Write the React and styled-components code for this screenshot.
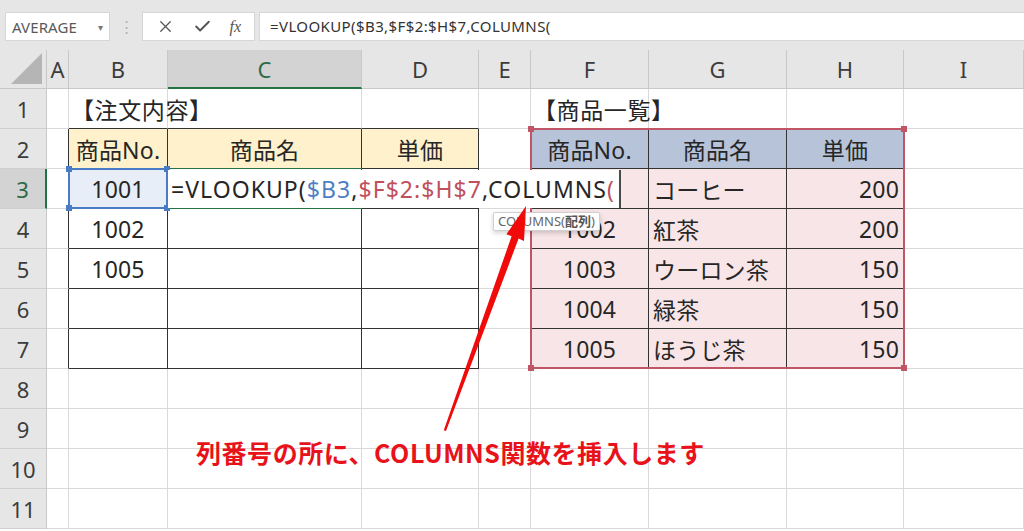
import React from 'react'
import styled, { createGlobalStyle } from 'styled-components'
import { X, Check } from 'lucide-react'

const GlobalStyle = createGlobalStyle`
  html, body {
    margin: 0;
    padding: 0;
    background: #ffffff;
    overflow: hidden;
  }
  body {
    font-family: 'Noto Sans', 'Noto Sans CJK JP', sans-serif;
  }
`

const COLS = [47, 22, 99, 194, 117, 52, 118, 138, 117, 120]
const LETTERS = ['', 'A', 'B', 'C', 'D', 'E', 'F', 'G', 'H', 'I']
const GRID = '#d9d9d9'
const DARK = '#333333'

// row -> { colIndex: [text, align, kind] }
const DATA = {
  1: { 2: ['【注文内容】', 'left', 'title'], 6: ['【商品一覧】', 'left', 'title'] },
  2: {
    2: ['商品No.', 'center', 'yhead'], 3: ['商品名', 'center', 'yhead'], 4: ['単価', 'center', 'yhead'],
    6: ['商品No.', 'center', 'bhead'], 7: ['商品名', 'center', 'bhead'], 8: ['単価', 'center', 'bhead'],
  },
  3: { 2: ['1001', 'center', 'sel'], 6: ['1001', 'center', 'pink'], 7: ['コーヒー', 'left', 'pink'], 8: ['200', 'right', 'pink'] },
  4: { 2: ['1002', 'center'], 6: ['1002', 'center', 'pink'], 7: ['紅茶', 'left', 'pink'], 8: ['200', 'right', 'pink'] },
  5: { 2: ['1005', 'center'], 6: ['1003', 'center', 'pink'], 7: ['ウーロン茶', 'left', 'pink'], 8: ['150', 'right', 'pink'] },
  6: { 6: ['1004', 'center', 'pink'], 7: ['緑茶', 'left', 'pink'], 8: ['150', 'right', 'pink'] },
  7: { 6: ['1005', 'center', 'pink'], 7: ['ほうじ茶', 'left', 'pink'], 8: ['150', 'right', 'pink'] },
}

const inTable = (r, c) => r >= 2 && r <= 7 && ((c >= 2 && c <= 4) || (c >= 6 && c <= 8))
const fillFor = (r, c, kind) => {
  if (kind === 'yhead') return '#fff1cc'
  if (kind === 'bhead') return '#b7c3d9'
  if (kind === 'sel') return '#e8eef8'
  if (r >= 3 && r <= 7 && c >= 6 && c <= 8) return '#f8e5e7'
  return 'transparent'
}

const App = () => {
  const rows = Array.from({ length: 11 }, (_, i) => i + 1)
  return (
    <Page>
      <GlobalStyle />
      <Toolbar>
        <NameBox>
          <span>AVERAGE</span>
          <Caret>▾</Caret>
        </NameBox>
        <Dots>⋮</Dots>
        <ButtonBox>
          <X size={19} strokeWidth={1.6} color="#555" />
          <Check size={19} strokeWidth={2.4} color="#555" />
          <Fx>fx</Fx>
        </ButtonBox>
        <FormulaInput>=VLOOKUP($B3,$F$2:$H$7,COLUMNS(</FormulaInput>
      </Toolbar>

      <Sheet>
        <Corner $r={0} $c={0}>
          <svg width="32" height="32" viewBox="0 0 32 32">
            <polygon points="31,0 31,31 0,31" fill="#b5b5b5" />
          </svg>
        </Corner>
        {LETTERS.slice(1).map((l, i) => (
          <ColHead key={l} $r={0} $c={i + 1} $active={l === 'C'}>{l}</ColHead>
        ))}
        {rows.map((r) => (
          <React.Fragment key={r}>
            <RowHead $r={r} $c={0} $active={r === 3}>{r}</RowHead>
            {COLS.slice(1).map((_, i) => {
              const c = i + 1
              const cell = (DATA[r] && DATA[r][c]) || ['', 'left']
              const [text, align, kind] = cell
              const right = inTable(r, c) || inTable(r, c + 1) ? DARK : GRID
              const bottom = inTable(r, c) || inTable(r + 1, c) ? DARK : GRID
              return (
                <Cell
                  key={c}
                  $r={r}
                  $c={c}
                  $align={align}
                  $bg={fillFor(r, c, kind)}
                  $right={right}
                  $bottom={bottom}
                  $title={kind === 'title'}
                >
                  {text}
                </Cell>
              )
            })}
          </React.Fragment>
        ))}

        <Selection $r={3} $c={2}>
          <Handle $pos="tl" $color="#4a7cc6" />
          <Handle $pos="tr" $color="#4a7cc6" />
          <Handle $pos="bl" $color="#4a7cc6" />
          <Handle $pos="br" $color="#4a7cc6" />
        </Selection>

        <RangeMark>
          <Handle $pos="tl" $color="#bf5565" />
          <Handle $pos="tr" $color="#bf5565" />
          <Handle $pos="bl" $color="#bf5565" />
          <Handle $pos="br" $color="#bf5565" />
        </RangeMark>

        <ActiveCell />

        <Editor>
          =VLOOKUP(<Ref $color="#4f7fc3">$B3</Ref>,<Ref $color="#c0505c">$F$2:$H$7</Ref>,COLUMNS<Ref $color="#c0505c">(</Ref>
          <Tip>
            COLUMNS(<b>配列</b>)
          </Tip>
        </Editor>
      </Sheet>

      <Arrow width="1024" height="531" viewBox="0 0 1024 531">
        <polygon
          points="526,206 524,241 518.6,238.6 446,431 443.8,430.2 511.6,236.2 506.4,234.2"
          fill="#f00a0a"
        />
      </Arrow>
      <Note>列番号の所に、COLUMNS関数を挿入します</Note>
    </Page>
  )
}

export default App

const Page = styled.div`
  position: relative;
  width: 1024px;
  height: 531px;
  overflow: hidden;
  background: #ffffff;
`
const Toolbar = styled.div`
  display: flex;
  align-items: flex-start;
  height: 50px;
  box-sizing: border-box;
  padding: 12px 0 0 5px;
  background: #e6e6e6;
`
const NameBox = styled.div`
  display: flex;
  align-items: center;
  justify-content: space-between;
  width: 105px;
  height: 29px;
  box-sizing: border-box;
  padding: 0 6px 0 6px;
  background: #ffffff;
  border: 1px solid #d6d6d6;
  color: #595959;
  font-size: 15px;
  letter-spacing: 0.1px;
`
const Caret = styled.span`
  font-size: 10px;
  color: #777;
`
const Dots = styled.div`
  width: 32px;
  height: 29px;
  line-height: 29px;
  text-align: center;
  color: #b0b0b0;
  font-size: 15px;
`
const ButtonBox = styled.div`
  display: flex;
  align-items: center;
  justify-content: space-around;
  width: 113px;
  height: 29px;
  box-sizing: border-box;
  padding: 0 4px;
  background: #ffffff;
  border: 1px solid #d6d6d6;
`
const Fx = styled.span`
  font-family: 'Liberation Serif', serif;
  font-style: italic;
  font-size: 16px;
  color: #555;
`
const FormulaInput = styled.div`
  flex: 1;
  height: 29px;
  line-height: 27px;
  margin-left: 4px;
  box-sizing: border-box;
  padding-left: 10px;
  background: #ffffff;
  border: 1px solid #d6d6d6;
  border-right: none;
  color: #333;
  font-size: 15px;
  letter-spacing: 0.4px;
`
const Sheet = styled.div`
  display: grid;
  grid-template-columns: ${COLS.map((w) => w + 'px').join(' ')};
  grid-template-rows: 39px repeat(11, 40px) 40px;
  color: #262626;
  font-size: 23px;
`
const place = ({ $r, $c }) => `grid-row: ${$r + 1}; grid-column: ${$c + 1};`

const Corner = styled.div`
  ${place};
  display: flex;
  align-items: flex-end;
  justify-content: flex-end;
  padding: 0 3px 3px 0;
  background: #e6e6e6;
  border-right: 1px solid #c8c8c8;
  border-bottom: 1px solid #c8c8c8;
`
const ColHead = styled.div`
  ${place};
  display: flex;
  align-items: center;
  justify-content: center;
  box-sizing: border-box;
  background: ${(p) => (p.$active ? '#d3d3d3' : '#e6e6e6')};
  color: ${(p) => (p.$active ? '#2e6b47' : '#3c3c3c')};
  border-right: 1px solid #c8c8c8;
  border-bottom: ${(p) => (p.$active ? '2px solid #217346' : '1px solid #c8c8c8')};
  font-size: 22px;
`
const RowHead = styled.div`
  ${place};
  display: flex;
  align-items: center;
  justify-content: center;
  box-sizing: border-box;
  background: ${(p) => (p.$active ? '#d3d3d3' : '#e6e6e6')};
  color: ${(p) => (p.$active ? '#2e6b47' : '#3c3c3c')};
  border-right: ${(p) => (p.$active ? '2px solid #217346' : '1px solid #c8c8c8')};
  border-bottom: 1px solid #cfcfcf;
  font-size: 22px;
`
const Cell = styled.div`
  ${place};
  display: flex;
  align-items: center;
  justify-content: ${(p) => (p.$align === 'center' ? 'center' : p.$align === 'right' ? 'flex-end' : 'flex-start')};
  box-sizing: border-box;
  min-width: 0;
  padding: 0 4px 0 ${(p) => (p.$title ? '2px' : '4px')};
  white-space: nowrap;
  overflow: visible;
  background: ${(p) => p.$bg};
  border-right: 1px solid ${(p) => p.$right};
  border-bottom: 1px solid ${(p) => p.$bottom};
  letter-spacing: ${(p) => (p.$title ? '0.6px' : '0.2px')};
`
const Selection = styled.div`
  ${place};
  position: relative;
  z-index: 3;
  margin: -1px 0 0 -1px;
  border: 2px solid #4a7cc6;
`
const RangeMark = styled.div`
  grid-row: 3 / 9;
  grid-column: 7 / 10;
  position: relative;
  z-index: 3;
  margin: -1px -1px 0 -1px;
  border: 2px solid #bf5565;
`
const Handle = styled.span`
  position: absolute;
  width: 6px;
  height: 6px;
  background: ${(p) => p.$color};
  ${(p) => (p.$pos[0] === 't' ? 'top: -4px;' : 'bottom: -4px;')}
  ${(p) => (p.$pos[1] === 'l' ? 'left: -4px;' : 'right: -4px;')}
`
const ActiveCell = styled.div`
  grid-row: 4;
  grid-column: 4;
  position: relative;
  z-index: 2;
  margin: -1px 0 0 -1px;
  border: 1px solid #217346;
`
const Editor = styled.div`
  grid-row: 4;
  grid-column: 4 / 8;
  justify-self: start;
  align-self: start;
  position: relative;
  z-index: 4;
  width: 453px;
  height: 38px;
  margin-top: 1px;
  box-sizing: border-box;
  padding-left: 3px;
  background: #ffffff;
  border-right: 2px solid #4a4a4a;
  line-height: 38px;
  white-space: nowrap;
  color: #262626;
  letter-spacing: 1.05px;
`
const Ref = styled.span`
  color: ${(p) => p.$color};
`
const Tip = styled.div`
  position: absolute;
  left: 325px;
  top: 42px;
  height: 17px;
  padding: 0 4px;
  background: #ffffff;
  border: 1px solid #d0d0d0;
  border-radius: 2px;
  box-shadow: 0 2px 5px rgba(0, 0, 0, 0.18);
  color: #666;
  font-size: 13px;
  letter-spacing: 0;
  line-height: 17px;
  b {
    color: #555;
  }
`
const Arrow = styled.svg`
  position: absolute;
  left: 0;
  top: 0;
  z-index: 6;
  pointer-events: none;
`
const Note = styled.div`
  position: absolute;
  left: 196px;
  top: 437px;
  z-index: 6;
  color: #e8121a;
  font-family: 'Noto Sans CJK JP', sans-serif;
  font-weight: 700;
  font-size: 25px;
  letter-spacing: 0.55px;
  line-height: 30px;
  white-space: nowrap;
`
